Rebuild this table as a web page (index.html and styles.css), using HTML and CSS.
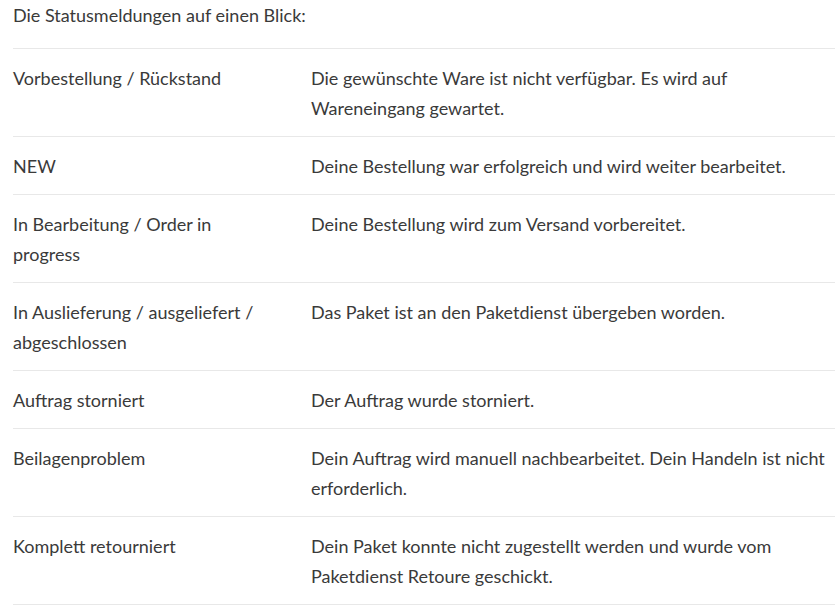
FILE: index.html
```html
<!DOCTYPE html>
<html lang="de">
<head>
<meta charset="utf-8">
<link rel="stylesheet" href="styles.css">
</head>
<body>
<div class="page">
  <p class="intro">Die Statusmeldungen auf einen Blick:</p>
  <div class="status-table">
    <div class="row"><div class="cell key">Vorbestellung / Rückstand</div><div class="cell val">Die gewünschte Ware ist nicht verfügbar. Es wird auf Wareneingang gewartet.</div></div>
    <div class="row"><div class="cell key">NEW</div><div class="cell val">Deine Bestellung war erfolgreich und wird weiter bearbeitet.</div></div>
    <div class="row"><div class="cell key">In Bearbeitung / Order in progress</div><div class="cell val">Deine Bestellung wird zum Versand vorbereitet.</div></div>
    <div class="row"><div class="cell key">In Auslieferung / ausgeliefert / abgeschlossen</div><div class="cell val">Das Paket ist an den Paketdienst übergeben worden.</div></div>
    <div class="row"><div class="cell key">Auftrag storniert</div><div class="cell val">Der Auftrag wurde storniert.</div></div>
    <div class="row"><div class="cell key">Beilagenproblem</div><div class="cell val">Dein Auftrag wird manuell nachbearbeitet. Dein Handeln ist nicht erforderlich.</div></div>
    <div class="row last"><div class="cell key">Komplett retourniert</div><div class="cell val">Dein Paket konnte nicht zugestellt werden und wurde vom Paketdienst Retoure geschickt.</div></div>
  </div>
</div>
</body>
</html>
```
FILE: styles.css
```css
html, body {
  margin: 0;
  padding: 0;
  background: #ffffff;
}
body {
  font-family: Lato, "Open Sans", sans-serif;
  font-size: 18px;
  line-height: 30px;
  color: #3a3a3a;
}
.page {
  padding-left: 13px;
}
.intro {
  margin: 0 0 18px 0;
}
.status-table {
  width: 822px;
}
.row {
  display: grid;
  grid-template-columns: 298px 1fr;
  border-top: 1px solid #e8e8e8;
  padding: 14px 0 13px 0;
}
.row.last {
  border-bottom: 1px solid #e8e8e8;
}
.cell.key {
  padding-right: 40px;
}
```
